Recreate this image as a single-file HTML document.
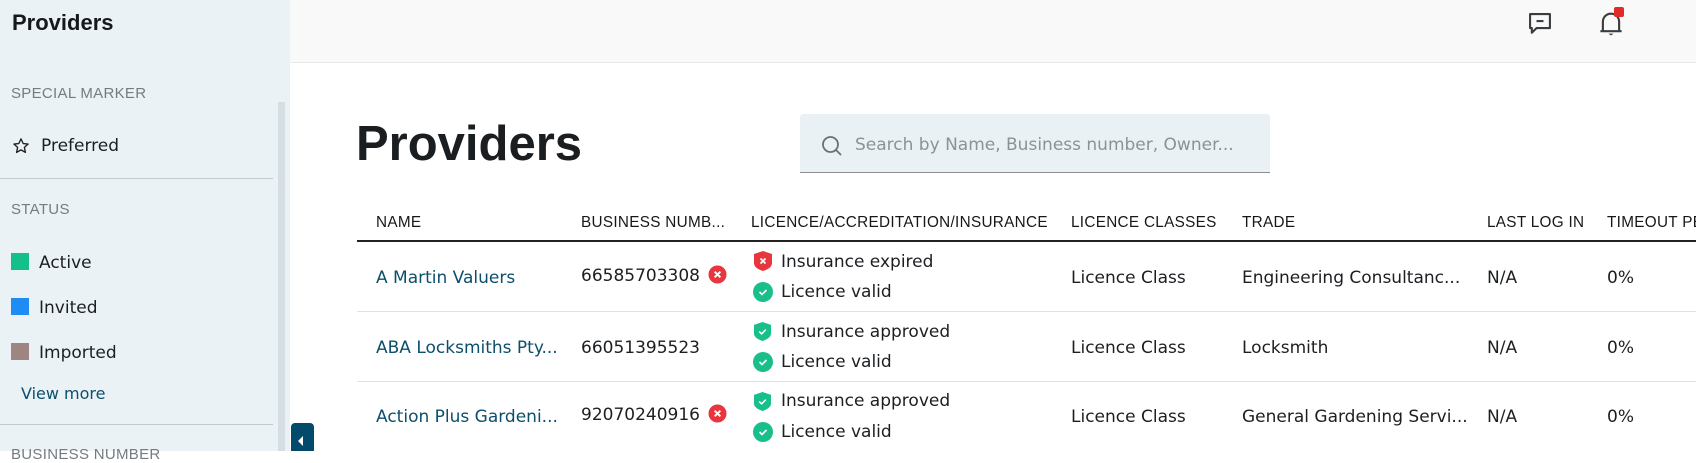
<!DOCTYPE html>
<html><head><meta charset="utf-8"><style>
*{margin:0;padding:0;box-sizing:border-box}
body{width:1696px;height:451px;overflow:hidden;background:#fff;font-family:"Liberation Sans",sans-serif;color:#1c1f22;position:relative}
.abs{position:absolute;white-space:nowrap}
#side{position:absolute;left:0;top:0;width:290px;height:451px;background:#ebf2f6}
.sec{font-size:15px;color:#757b80;letter-spacing:.3px}
.it{font-size:17px;font-family:"DejaVu Sans",sans-serif}
.sq{position:absolute;width:18px;height:17px}
.hr{position:absolute;left:0;width:273px;height:1px;background:#c3c8cc}
#top{position:absolute;left:290px;top:0;right:0;height:63px;background:#f9f9f9;border-bottom:1px solid #e8e8e8}
.th{font-size:15.3px;letter-spacing:.3px;top:214px;color:#15181b}
.td{font-size:17px;font-family:"DejaVu Sans",sans-serif;margin-top:1px}
.lnk{color:#0b4f6c}
.row{position:absolute;left:357px;right:0;height:1px;background:#e2e2e2}
</style></head><body>
<div id="side">
 <div class="abs" style="left:12px;top:10px;font-size:22px;font-weight:bold;color:#15191c">Providers</div>
 <div class="abs sec" style="left:11px;top:85px">SPECIAL MARKER</div>
 <svg class="abs" style="left:12px;top:137px" width="18" height="18" viewBox="0 0 24 24"><path d="M12 2.5l2.9 6.2 6.6.7-5 4.5 1.4 6.6L12 17.2l-5.9 3.3 1.4-6.6-5-4.5 6.6-.7z" fill="none" stroke="#222" stroke-width="1.8" stroke-linejoin="round"/></svg>
 <div class="abs it" style="left:41px;top:136px">Preferred</div>
 <div class="hr" style="top:178px"></div>
 <div class="abs sec" style="left:11px;top:201px">STATUS</div>
 <div class="sq" style="left:11px;top:253px;background:#13c08a"></div>
 <div class="abs it" style="left:39px;top:253px">Active</div>
 <div class="sq" style="left:11px;top:298px;background:#1e8cf2"></div>
 <div class="abs it" style="left:39px;top:298px">Invited</div>
 <div class="sq" style="left:11px;top:343px;background:#9e8582"></div>
 <div class="abs it" style="left:39px;top:343px">Imported</div>
 <div class="abs lnk" style="left:21px;top:384px;font-size:16px;font-family:'DejaVu Sans',sans-serif">View more</div>
 <div class="hr" style="top:424px"></div>
 <div class="abs sec" style="left:11px;top:446px">BUSINESS NUMBER</div>
 <div style="position:absolute;left:278px;top:102px;width:7px;height:349px;background:#d5dfe3"></div>
</div>
<div style="position:absolute;left:291px;top:423px;width:23px;height:28px;background:#044a6b;border-radius:4px 4px 0 0"></div>
<svg class="abs" style="left:297px;top:436px" width="8" height="10"><path d="M6 0L1 5l5 5z" fill="#fff"/></svg>
<div id="top"></div>
<svg class="abs" style="left:1526px;top:10px" width="28" height="28" viewBox="0 0 24 24"><path d="M3.5 3.5h17v12H9l-4 4v-4H3.5z" fill="none" stroke="#3a3d40" stroke-width="1.8" stroke-linejoin="round"/><path d="M9 9.5h6" stroke="#3a3d40" stroke-width="1.8"/></svg>
<svg class="abs" style="left:1596px;top:8px" width="30" height="30" viewBox="0 0 24 24"><path d="M5.5 18V11a6.5 6.5 0 0 1 13 0v7M3.5 18.5h17" fill="none" stroke="#3a3d40" stroke-width="1.7"/><path d="M10 20.5h4l-2 1.5z" fill="#3a3d40"/></svg>
<div class="abs" style="left:1614px;top:7px;width:10px;height:10px;border-radius:2px;background:#e02b2b"></div>

<div class="abs" style="left:356px;top:116px;font-size:49px;font-weight:bold;color:#1b1e21">Providers</div>
<div style="position:absolute;left:800px;top:114px;width:470px;height:59px;background:#eaf1f5;border-bottom:1px solid #8a8f93;border-radius:3px 3px 0 0"></div>
<svg class="abs" style="left:820px;top:134px" width="24" height="24" viewBox="0 0 24 24"><circle cx="10.5" cy="10.5" r="7.5" fill="none" stroke="#6b7075" stroke-width="1.8"/><path d="M16 16l5 5" stroke="#6b7075" stroke-width="1.8"/></svg>
<div class="abs" style="left:855px;top:135px;font-size:17px;color:#8c9196;font-family:'DejaVu Sans',sans-serif">Search by Name, Business number, Owner...</div>

<div class="abs th" style="left:376px">NAME</div>
<div class="abs th" style="left:581px">BUSINESS NUMB...</div>
<div class="abs th" style="left:751px">LICENCE/ACCREDITATION/INSURANCE</div>
<div class="abs th" style="left:1071px">LICENCE CLASSES</div>
<div class="abs th" style="left:1242px">TRADE</div>
<div class="abs th" style="left:1487px">LAST LOG IN</div>
<div class="abs th" style="left:1607px">TIMEOUT PERIOD</div>
<div style="position:absolute;left:357px;right:0;top:240px;height:2px;background:#222"></div>
<div class="row" style="top:311px"></div>
<div class="row" style="top:381px"></div>

<div class="abs td lnk" style="left:376px;top:267px">A Martin Valuers</div>
<div class="abs td" style="left:581px;top:265px">66585703308</div>
<div class="abs td lnk" style="left:376px;top:337px">ABA Locksmiths Pty...</div>
<div class="abs td" style="left:581px;top:337px">66051395523</div>
<div class="abs td lnk" style="left:376px;top:406px">Action Plus Gardeni...</div>
<div class="abs td" style="left:581px;top:404px">92070240916</div>
<svg class="abs" style="left:708px;top:265px" width="19" height="19" viewBox="0 0 20 20"><circle cx="10" cy="10" r="9.5" fill="#e8363f"/><path d="M7 7l6 6M13 7l-6 6" stroke="#fff" stroke-width="2"/></svg>
<svg class="abs" style="left:708px;top:404px" width="19" height="19" viewBox="0 0 20 20"><circle cx="10" cy="10" r="9.5" fill="#e8363f"/><path d="M7 7l6 6M13 7l-6 6" stroke="#fff" stroke-width="2"/></svg>

<svg class="abs" style="left:754px;top:251px" width="18" height="20" viewBox="0 0 18 20"><path d="M9 0L18 3v9c0 4-4 6.5-9 8-5-1.5-9-4-9-8V3z" fill="#e8363f"/><path d="M6.5 7.5l5 5M11.5 7.5l-5 5" stroke="#fff" stroke-width="1.8"/></svg>
<svg class="abs" style="left:754px;top:322px" width="17" height="19" viewBox="0 0 18 20"><path d="M9 0L18 3v9c0 4-4 6.5-9 8-5-1.5-9-4-9-8V3z" fill="#19bf8a"/><path d="M5.5 10l2.5 2.5 4.5-4.5" fill="none" stroke="#fff" stroke-width="1.6"/></svg>
<svg class="abs" style="left:754px;top:392px" width="17" height="19" viewBox="0 0 18 20"><path d="M9 0L18 3v9c0 4-4 6.5-9 8-5-1.5-9-4-9-8V3z" fill="#19bf8a"/><path d="M5.5 10l2.5 2.5 4.5-4.5" fill="none" stroke="#fff" stroke-width="1.6"/></svg>
<svg class="abs" style="left:753px;top:282px" width="20" height="20" viewBox="0 0 20 20"><circle cx="10" cy="10" r="10" fill="#19bf8a"/><path d="M6.5 10l2.5 2.5 4.5-4.5" fill="none" stroke="#fff" stroke-width="1.6"/></svg>
<svg class="abs" style="left:753px;top:352px" width="20" height="20" viewBox="0 0 20 20"><circle cx="10" cy="10" r="10" fill="#19bf8a"/><path d="M6.5 10l2.5 2.5 4.5-4.5" fill="none" stroke="#fff" stroke-width="1.6"/></svg>
<svg class="abs" style="left:753px;top:422px" width="20" height="20" viewBox="0 0 20 20"><circle cx="10" cy="10" r="10" fill="#19bf8a"/><path d="M6.5 10l2.5 2.5 4.5-4.5" fill="none" stroke="#fff" stroke-width="1.6"/></svg>
<div class="abs td" style="left:781px;top:251px">Insurance expired</div>
<div class="abs td" style="left:781px;top:281px">Licence valid</div>
<div class="abs td" style="left:781px;top:321px">Insurance approved</div>
<div class="abs td" style="left:781px;top:351px">Licence valid</div>
<div class="abs td" style="left:781px;top:390px">Insurance approved</div>
<div class="abs td" style="left:781px;top:421px">Licence valid</div>

<div class="abs td" style="left:1071px;top:267px">Licence Class</div>
<div class="abs td" style="left:1242px;top:267px">Engineering Consultanc...</div>
<div class="abs td" style="left:1487px;top:267px">N/A</div>
<div class="abs td" style="left:1607px;top:267px">0%</div>
<div class="abs td" style="left:1071px;top:337px">Licence Class</div>
<div class="abs td" style="left:1242px;top:337px">Locksmith</div>
<div class="abs td" style="left:1487px;top:337px">N/A</div>
<div class="abs td" style="left:1607px;top:337px">0%</div>
<div class="abs td" style="left:1071px;top:406px">Licence Class</div>
<div class="abs td" style="left:1242px;top:406px">General Gardening Servi...</div>
<div class="abs td" style="left:1487px;top:406px">N/A</div>
<div class="abs td" style="left:1607px;top:406px">0%</div>
</body></html>
